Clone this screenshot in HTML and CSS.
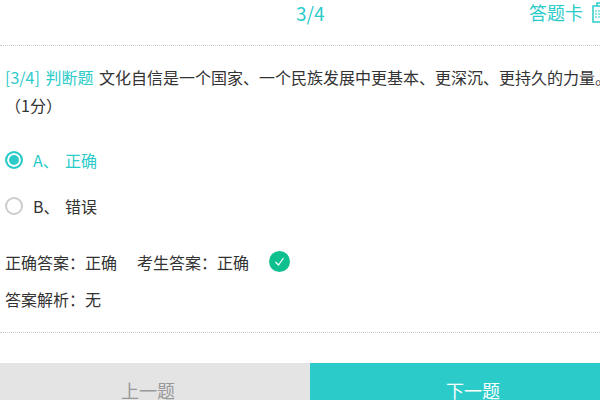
FILE: index.html
```html
<!DOCTYPE html>
<html lang="en">
<head>
  <meta charset="UTF-8" />
  <title>答题卡</title>
  <link rel="stylesheet" href="styles.css">
</head>
<body>
  <div class="page">
    <div class="top-bar">
      <span class="progress">3/4</span>
      <span class="card-link">答题卡
        <svg class="card-icon" width="16" height="22" viewBox="0 0 16 22" fill="none" stroke="#2bcbc9" stroke-width="1.5">
          <rect x="1" y="5" width="14" height="16" />
          <path d="M5 5V2H15" />
          <path d="M3 10H13M3 13H13M3 16H13" stroke-width="1" stroke-dasharray="2 1" />
        </svg>
      </span>
    </div>

    <div class="question">
      <p class="title"><span class="type">[3/4] 判断题</span> 文化自信是一个国家、一个民族发展中更基本、更深沉、更持久的力量。<span class="score">（1分）</span></p>
      <div class="option selected"><span class="radio"></span><span class="letter">A、</span><span>正确</span></div>
      <div class="option"><span class="radio"></span><span class="letter">B、</span><span>错误</span></div>
    </div>

    <div class="answer">
      <div class="answer-row">
        <span>正确答案：正确</span>
        <span class="student">考生答案：正确</span>
        <svg class="ok" width="21" height="21" viewBox="0 0 21 21">
          <circle cx="10.5" cy="10.5" r="10.5" fill="#0fc08f" />
          <path d="M6.5 11L9.5 14L14.5 7" fill="none" stroke="#fff" stroke-width="1.2" />
        </svg>
      </div>
      <div class="answer-row">答案解析：无</div>
    </div>

    <div class="footer">
      <div class="btn prev">上一题</div>
      <div class="btn next">下一题</div>
    </div>
  </div>
</body>
</html>
```

FILE: styles.css
```css
* {
  box-sizing: border-box;
}

html, body {
  margin: 0;
  padding: 0;
  height: 400px;
  overflow: hidden;
  background: #fff;
}

.page {
  width: 620px;
  height: 400px;
  overflow: hidden;
  color: #333;
  font-family: "Noto Sans CJK SC", "Liberation Sans", sans-serif;
  font-size: 16px;
}

.top-bar {
  display: flex;
  justify-content: space-between;
  align-items: center;
  width: 600px;
  height: 46px;
  padding: 0 0 21px 296px;
  border-bottom: 1px dotted #ccc;
  color: #2bcbc9;
  font-size: 18px;
}

.progress {
  font-size: 19px;
}

.card-link {
  display: flex;
  align-items: center;
  gap: 9px;
  margin-right: -8px;
}

.question {
  padding: 17px 5px 0;
}

.title {
  margin: 0 0 18px;
  width: 610px;
  line-height: 28px;
}

.type {
  margin-right: 2px;
  color: #2bcbc9;
  word-spacing: 2px;
}

.score {
  display: block;
}

.option {
  display: flex;
  align-items: center;
  height: 46px;
}

.option.selected {
  color: #2bcbc9;
}

.radio {
  width: 18px;
  height: 18px;
  margin-right: 10px;
  border: 2px solid #ccc;
  border-radius: 50%;
}

.selected .radio {
  border-color: #2bcbc9;
  background: #2bcbc9;
  box-shadow: inset 0 0 0 2px #fff;
}

.letter {
  width: 32px;
}

.answer {
  padding: 14px 5px 15px;
  width: 600px;
  border-bottom: 1px dotted #ccc;
}

.answer-row {
  display: flex;
  align-items: center;
  height: 37px;
}

.student {
  margin-left: 20px;
}

.ok {
  margin-left: 20px;
}

.footer {
  display: flex;
  width: 600px;
  height: 60px;
  margin-top: 30px;
  font-size: 18px;
}

.btn {
  padding-top: 14px;
  text-align: center;
}

.prev {
  width: 310px;
  padding-right: 14px;
  background: #e4e4e4;
  color: #999;
}

.next {
  flex: 1;
  padding-left: 36px;
  background: #2bcbc9;
  color: #fff;
}
```
